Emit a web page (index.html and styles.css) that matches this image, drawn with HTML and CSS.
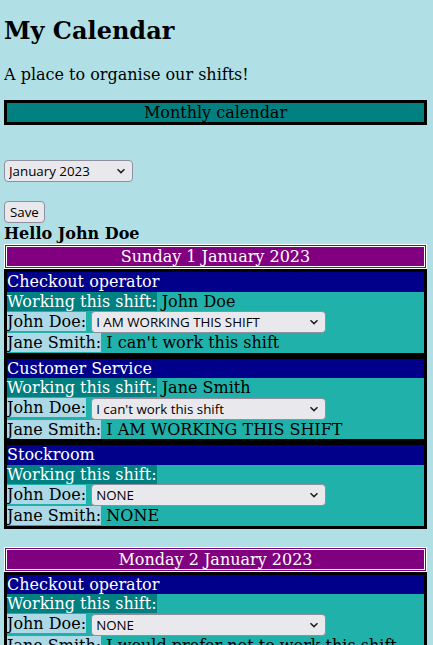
FILE: index.html
```html
<!DOCTYPE html>
<html lang="en">
  <head>
    <title>My Calendar</title>
    <meta charset="UTF-8">
    <link rel="stylesheet" href="styles.css">
  </head>
  <body>
    <header>
      <h1>My Calendar</h1>
      <p>A place to organise our shifts!</p>
      <nav class="monthly">Monthly calendar</nav>
    </header>

    <main>
      <form class="month-form" action="" method="post">
        <select name="month" class="month-select">
          <option>January 2023</option>
          <option>February 2023</option>
          <option>March 2023</option>
        </select>
        <div class="save-row">
          <button class="save-btn">Save</button>
        </div>
      </form>

      <div class="greeting">Hello John Doe</div>

      <section class="day">
        <div class="day-title">Sunday 1 January 2023</div>
        <div class="shifts">
          <div class="shift">
            <div class="shift-name">Checkout operator</div>
            <div class="row"><span class="label worker">Working this shift:</span> <span>John Doe</span></div>
            <div class="row"><span class="label">John Doe:</span> <select class="choice">
                <option>NONE</option>
                <option selected>I AM WORKING THIS SHIFT</option>
                <option>I can work this shift</option>
                <option>I would prefer not to work this shift</option>
                <option>I can't work this shift</option>
              </select></div>
            <div class="row"><span class="label">Jane Smith:</span> <span>I can't work this shift</span></div>
          </div>
          <div class="shift">
            <div class="shift-name">Customer Service</div>
            <div class="row"><span class="label worker">Working this shift:</span> <span>Jane Smith</span></div>
            <div class="row"><span class="label">John Doe:</span> <select class="choice">
                <option>NONE</option>
                <option>I AM WORKING THIS SHIFT</option>
                <option>I can work this shift</option>
                <option>I would prefer not to work this shift</option>
                <option selected>I can't work this shift</option>
              </select></div>
            <div class="row"><span class="label">Jane Smith:</span> <span>I AM WORKING THIS SHIFT</span></div>
          </div>
          <div class="shift">
            <div class="shift-name">Stockroom</div>
            <div class="row"><span class="label worker">Working this shift:</span></div>
            <div class="row"><span class="label">John Doe:</span> <select class="choice">
                <option selected>NONE</option>
                <option>I AM WORKING THIS SHIFT</option>
                <option>I can work this shift</option>
                <option>I would prefer not to work this shift</option>
                <option>I can't work this shift</option>
              </select></div>
            <div class="row"><span class="label">Jane Smith:</span> <span>NONE</span></div>
          </div>
        </div>
      </section>

      <section class="day">
        <div class="day-title">Monday 2 January 2023</div>
        <div class="shifts">
          <div class="shift">
            <div class="shift-name">Checkout operator</div>
            <div class="row"><span class="label worker">Working this shift:</span></div>
            <div class="row"><span class="label">John Doe:</span> <select class="choice">
                <option selected>NONE</option>
                <option>I AM WORKING THIS SHIFT</option>
                <option>I can work this shift</option>
                <option>I would prefer not to work this shift</option>
                <option>I can't work this shift</option>
              </select></div>
            <div class="row"><span class="label">Jane Smith:</span> <span>I would prefer not to work this shift</span></div>
          </div>
          <div class="shift">
            <div class="shift-name">Customer Service</div>
            <div class="row"><span class="label worker">Working this shift:</span></div>
            <div class="row"><span class="label">John Doe:</span> <select class="choice">
                <option selected>NONE</option>
                <option>I AM WORKING THIS SHIFT</option>
                <option>I can work this shift</option>
                <option>I would prefer not to work this shift</option>
                <option>I can't work this shift</option>
              </select></div>
            <div class="row"><span class="label">Jane Smith:</span> <span>NONE</span></div>
          </div>
        </div>
      </section>
    </main>
  </body>
</html>
```

FILE: styles.css
```css
/* General styles */

html {
  font-family: "DejaVu Serif", serif;
  font-size: 16px;
}

body {
  margin: 0 6px 0 4px;
  background-color: PowderBlue;
}

h1 {
  font-size: 1.5rem;
  margin: 1rem 0rem 1.25rem 0rem;
}

p {
  margin: 1rem 0rem;
}

.monthly {
  border: 3px solid black;
  background-color: Teal;
  text-align: center;
}

/* Form controls */

select,
button {
  box-sizing: border-box;
  height: 22px;
  border: 1px solid #8f8f9d;
  border-radius: 4px;
  background-color: #e9e9ed;
  color: black;
  font-family: "Open Sans", sans-serif;
  font-size: 13.33px;
}

select {
  padding: 0rem 1.5rem 0rem 4px;
  -webkit-appearance: none;
  appearance: none;
  /* chevron */
  background-image: url("data:image/svg+xml,%3Csvg xmlns='http://www.w3.org/2000/svg' width='10' height='6' viewBox='0 0 10 6'%3E%3Cpath d='M1.5 1.2 5 4.6 8.5 1.2' fill='none' stroke='%23222' stroke-width='1.5'/%3E%3C/svg%3E");
  background-repeat: no-repeat;
  background-position: right 6px center;
}

button {
  padding: 0rem 5px;
}

.month-form {
  margin-top: 35px;
}

.month-select {
  width: 129px;
}

.save-row {
  margin-top: 19px;
}

.greeting {
  font-weight: bold;
  line-height: 21px;
}

/* Days */

.day {
  margin-bottom: 18px;
}

.day-title {
  border: 3px double white;
  background-color: Purple;
  color: white;
  text-align: center;
}

.shifts {
  display: flex;
  flex-direction: column;
  gap: 6px;
  border: 3px solid black;
  background-color: black;
}

.shift-name {
  background-color: DarkBlue;
  color: white;
  line-height: 19.5px;
}

.row {
  background-color: LightSeaGreen;
  line-height: 19.5px;
}

.label {
  background-color: LightBlue;
}

.label.worker {
  background-color: Teal;
  color: white;
}

.choice {
  width: 235px;
  vertical-align: middle;
}
```
